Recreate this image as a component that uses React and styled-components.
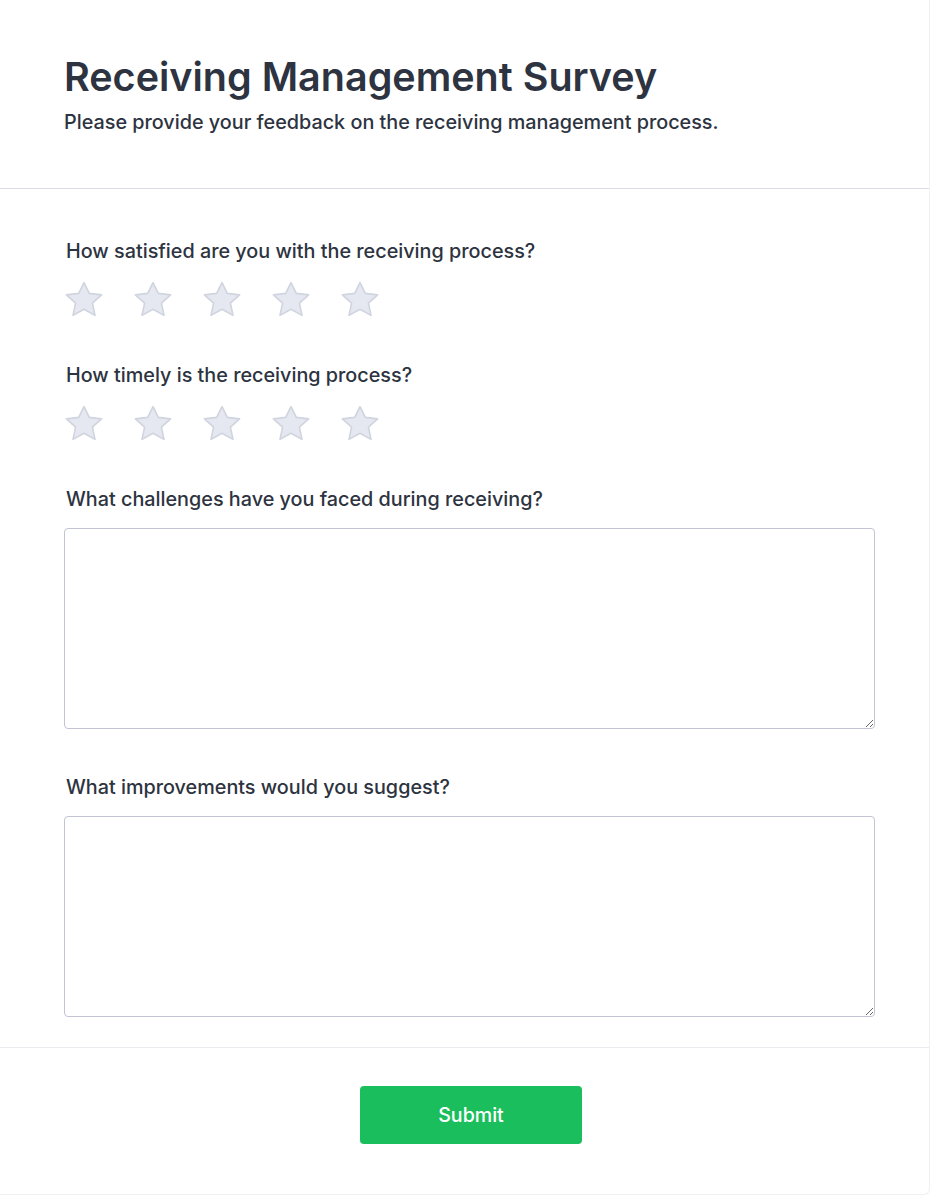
import React, { useState } from "react";
import styled, { createGlobalStyle } from "styled-components";

const GlobalStyle = createGlobalStyle`
  html, body {
    margin: 0;
    padding: 0;
    background: #ffffff;
  }
  body {
    font-family: Inter, "Noto Sans", "Liberation Sans", sans-serif;
    color: #2d3748;
  }
  * {
    box-sizing: border-box;
  }
`;

const Card = styled.div`
  width: 930px;
  min-height: 1195px;
  background: #fff;
  border-right: 1px solid #f1f1f4;
  border-bottom: 1px solid #f1f1f4;
  border-bottom-right-radius: 6px;
  display: flex;
  flex-direction: column;
`;

const Header = styled.header`
  padding: 56px 54px 52px 64px;
  border-bottom: 1px solid #dcdce8;
`;

const Title = styled.h1`
  margin: 0;
  font-size: 39.5px;
  line-height: 42px;
  font-weight: 600;
  color: #2d3340;
`;

const Subtitle = styled.p`
  margin: 10px 0 0;
  font-size: 19.8px;
  line-height: 28px;
  font-weight: 500;
  color: #2d3340;
`;

const Body = styled.form`
  padding: 48px 54px 30px 64px;
  display: flex;
  flex-direction: column;
`;

const Question = styled.div`
  display: flex;
  flex-direction: column;
  margin-top: ${({ $gap }) => $gap || "0"};
`;

const Label = styled.label`
  font-size: 19.8px;
  line-height: 28px;
  font-weight: 500;
  color: #2d3340;
  padding-left: 2px;
  margin-bottom: ${({ $tight }) => ($tight ? "15px" : "17px")};
`;

const StarRow = styled.div`
  display: flex;
  gap: 29px;
  height: 36px;
  align-items: center;
`;

const StarButton = styled.button`
  width: 40px;
  height: 40px;
  padding: 0;
  border: none;
  background: transparent;
  cursor: pointer;
  display: flex;
  align-items: center;
  justify-content: center;

  svg {
    width: 40px;
    height: 40px;
  }
  path {
    fill: ${({ $on }) => ($on ? "#facc15" : "#e5e8f1")};
    stroke: ${({ $on }) => ($on ? "#eab308" : "#d0d4df")};
  }
`;

const TextArea = styled.textarea`
  width: 100%;
  height: 201px;
  border: 1px solid #c2c3d3;
  border-radius: 4px;
  padding: 10px 12px;
  font-family: inherit;
  font-size: 16px;
  color: #2d3340;
  resize: vertical;
  outline: none;
  display: block;
`;

const Footer = styled.div`
  border-top: 1px solid #ececf0;
  padding: 38px 54px 50px 64px;
  display: flex;
  justify-content: center;
`;

const SubmitButton = styled.button`
  width: 222px;
  height: 58px;
  margin-left: 3px;
  border: none;
  border-radius: 4px;
  background: #1abe5c;
  color: #fff;
  font-family: inherit;
  font-size: 19.6px;
  font-weight: 500;
  cursor: pointer;
`;

// rounded five-point star, outlined
const Star = () => (
  <svg viewBox="0 0 40 40">
    <path
      strokeWidth="1.6"
      strokeLinejoin="round"
      d="M20 2.6 L25.3 13.4 L37.6 14.9 L28.4 23.2 L31 35.4 L20 29.2 L9 35.4 L11.6 23.2 L2.4 14.9 L14.7 13.4 Z"
    />
  </svg>
);

const Rating = ({ value, onChange }) => (
  <StarRow>
    {[1, 2, 3, 4, 5].map((n) => (
      <StarButton key={n} type="button" $on={n <= value} onClick={() => onChange(n)}>
        <Star />
      </StarButton>
    ))}
  </StarRow>
);

export default function App() {
  const [satisfied, setSatisfied] = useState(0);
  const [timely, setTimely] = useState(0);

  return (
    <>
      <GlobalStyle />
      <Card>
        <Header>
          <Title>Receiving Management Survey</Title>
          <Subtitle>Please provide your feedback on the receiving management process.</Subtitle>
        </Header>
        <Body onSubmit={(e) => e.preventDefault()}>
          <Question>
            <Label>How satisfied are you with the receiving process?</Label>
            <Rating value={satisfied} onChange={setSatisfied} />
          </Question>
          <Question $gap="43px">
            <Label>How timely is the receiving process?</Label>
            <Rating value={timely} onChange={setTimely} />
          </Question>
          <Question $gap="43px">
            <Label $tight>What challenges have you faced during receiving?</Label>
            <TextArea />
          </Question>
          <Question $gap="44px">
            <Label $tight>What improvements would you suggest?</Label>
            <TextArea />
          </Question>
        </Body>
        <Footer>
          <SubmitButton type="button">Submit</SubmitButton>
        </Footer>
      </Card>
    </>
  );
}
